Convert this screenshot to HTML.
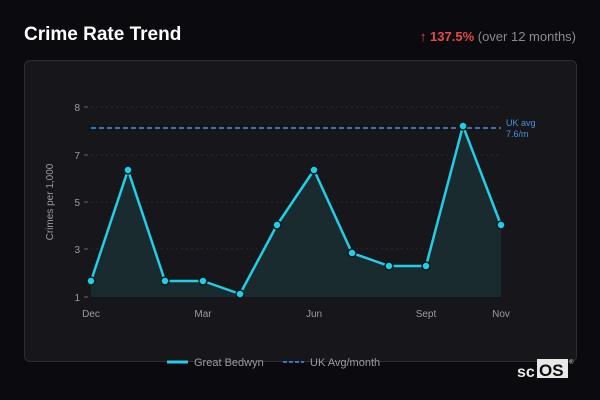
<!DOCTYPE html>
<html><head><style>
body{margin:0;width:600px;height:400px;background:#0b0b0f;font-family:"Liberation Sans",sans-serif;position:relative;overflow:hidden}
.t{position:absolute;left:24px;top:24px;color:#fff;font-weight:bold;font-size:19px}
.ch{position:absolute;right:24px;top:29px;font-size:13px;color:#8a8a90}
.ch b{color:#e5484d}
.card{position:absolute;left:24px;top:60px;width:551px;height:300px;border:1px solid #2c2c32;border-radius:6px;background:#17171b}
svg{position:absolute;left:0;top:0}
</style></head><body>
<div class="t">Crime Rate Trend</div>
<div class="ch"><b>↑ 137.5%</b> (over 12 months)</div>
<div class="card"></div>
<svg width="600" height="400" font-family="Liberation Sans, sans-serif">
<g stroke="#2a2a30" stroke-dasharray="2 3" stroke-width="1">
<line x1="91" x2="501" y1="107" y2="107"/><line x1="91" x2="501" y1="155" y2="155"/>
<line x1="91" x2="501" y1="202" y2="202"/><line x1="91" x2="501" y1="249" y2="249"/>
</g>
<g fill="#9a9aa0" font-size="10" text-anchor="end">
<text x="80" y="111">8</text><text x="80" y="159">7</text><text x="80" y="206">5</text><text x="80" y="253">3</text><text x="80" y="301">1</text>
</g>
<g stroke="#666" ><line x1="84" x2="88" y1="107" y2="107"/><line x1="84" x2="88" y1="155" y2="155"/><line x1="84" x2="88" y1="202" y2="202"/><line x1="84" x2="88" y1="249" y2="249"/><line x1="84" x2="88" y1="297" y2="297"/></g>
<text x="53" y="202" fill="#9a9aa0" font-size="10" text-anchor="middle" transform="rotate(-90 53 202)">Crimes per 1,000</text>
<g fill="#9a9aa0" font-size="10" text-anchor="middle">
<text x="91" y="317">Dec</text><text x="203" y="317">Mar</text><text x="314" y="317">Jun</text><text x="426" y="317">Sept</text><text x="501" y="317">Nov</text>
</g>
<polygon fill="#1a2b30" points="91,297 91,281 128,170 165,281 203,281 240,294 277,225 314,170 352,253 389,266 426,266 463,126 501,225 501,297"/>
<line x1="91" x2="501" y1="128" y2="128" stroke="#4a8fe0" stroke-width="1.5" stroke-dasharray="5 3"/>
<text x="506" y="126" fill="#4a8fe0" font-size="9">UK avg</text><text x="506" y="137" fill="#4a8fe0" font-size="9">7.6/m</text>
<polyline fill="none" stroke="#22cde6" stroke-width="2.5" stroke-linejoin="round" points="91,281 128,170 165,281 203,281 240,294 277,225 314,170 352,253 389,266 426,266 463,126 501,225"/>
<g fill="#22cde6" stroke="#0e1a1e" stroke-width="1.5">
<circle cx="91" cy="281" r="4"/><circle cx="128" cy="170" r="4"/><circle cx="165" cy="281" r="4"/><circle cx="203" cy="281" r="4"/><circle cx="240" cy="294" r="4"/><circle cx="277" cy="225" r="4"/><circle cx="314" cy="170" r="4"/><circle cx="352" cy="253" r="4"/><circle cx="389" cy="266" r="4"/><circle cx="426" cy="266" r="4"/><circle cx="463" cy="126" r="4"/><circle cx="501" cy="225" r="4"/>
</g>
<line x1="167" x2="188" y1="362" y2="362" stroke="#22cde6" stroke-width="3"/>
<text x="194" y="366" fill="#9a9aa0" font-size="11">Great Bedwyn</text>
<line x1="283" x2="304" y1="362" y2="362" stroke="#4a8fe0" stroke-width="1.5" stroke-dasharray="4 2"/>
<text x="310" y="366" fill="#9a9aa0" font-size="11">UK Avg/month</text>
<text x="517" y="377" fill="#e8e8e8" font-size="16" font-weight="bold">sc</text>
<rect x="537" y="359" width="31" height="19" fill="#e8e8e8"/>
<text x="539" y="376" fill="#0b0b0f" font-size="17" font-weight="bold">OS</text>
<text x="569" y="364" fill="#ccc" font-size="6">®</text>
</svg>
</body></html>
